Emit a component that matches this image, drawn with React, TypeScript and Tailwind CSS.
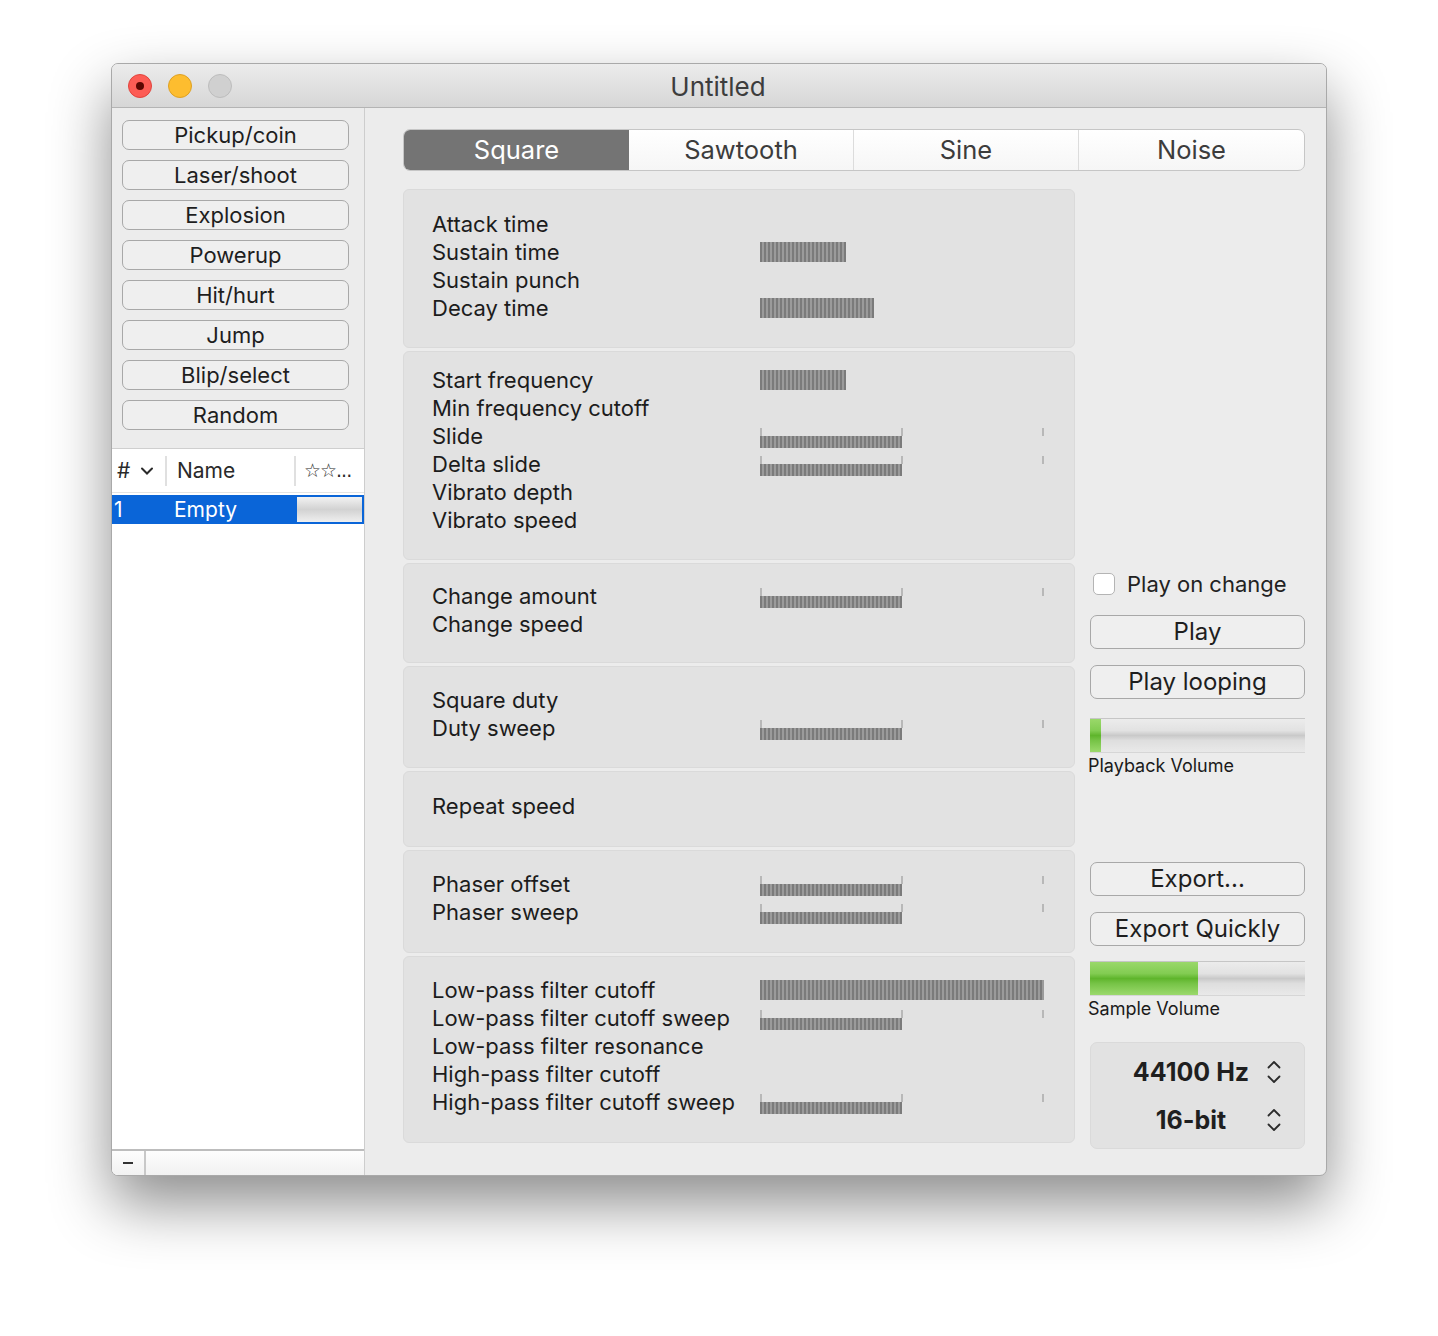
type Row = { label: string; kind: 'none' | 'bar' | 'center'; w?: number };
type Group = { h: number; pt: number; rows: Row[] };

const groups: Group[] = [
  {
    h: 159,
    pt: 20,
    rows: [
      { label: 'Attack time', kind: 'none' },
      { label: 'Sustain time', kind: 'bar', w: 86 },
      { label: 'Sustain punch', kind: 'none' },
      { label: 'Decay time', kind: 'bar', w: 114 },
    ],
  },
  {
    h: 209,
    pt: 14,
    rows: [
      { label: 'Start frequency', kind: 'bar', w: 86 },
      { label: 'Min frequency cutoff', kind: 'none' },
      { label: 'Slide', kind: 'center' },
      { label: 'Delta slide', kind: 'center' },
      { label: 'Vibrato depth', kind: 'none' },
      { label: 'Vibrato speed', kind: 'none' },
    ],
  },
  {
    h: 100,
    pt: 18,
    rows: [
      { label: 'Change amount', kind: 'center' },
      { label: 'Change speed', kind: 'none' },
    ],
  },
  {
    h: 102,
    pt: 19,
    rows: [
      { label: 'Square duty', kind: 'none' },
      { label: 'Duty sweep', kind: 'center' },
    ],
  },
  { h: 76, pt: 20, rows: [{ label: 'Repeat speed', kind: 'none' }] },
  {
    h: 103,
    pt: 19,
    rows: [
      { label: 'Phaser offset', kind: 'center' },
      { label: 'Phaser sweep', kind: 'center' },
    ],
  },
  {
    h: 187,
    pt: 19,
    rows: [
      { label: 'Low-pass filter cutoff', kind: 'bar', w: 284 },
      { label: 'Low-pass filter cutoff sweep', kind: 'center' },
      { label: 'Low-pass filter resonance', kind: 'none' },
      { label: 'High-pass filter cutoff', kind: 'none' },
      { label: 'High-pass filter cutoff sweep', kind: 'center' },
    ],
  },
];

const presets = ['Pickup/coin', 'Laser/shoot', 'Explosion', 'Powerup', 'Hit/hurt', 'Jump', 'Blip/select', 'Random'];

const stripes =
  'bg-[repeating-linear-gradient(90deg,#7b7b7b_0px,#7b7b7b_2px,#9b9b9b_2px,#9b9b9b_4px)]';

function Slider({ row }: { row: Row }) {
  if (row.kind === 'bar') {
    return <div className={`h-[20px] ${stripes}`} style={{ width: row.w }} />;
  }
  if (row.kind === 'center') {
    return (
      <div className="w-[284px] mt-[4px]">
        <div className="flex justify-between h-[8px]">
          <div className="w-[2px] bg-[#b8b8b8]" />
          <div className="w-[2px] bg-[#b8b8b8]" />
          <div className="w-[2px] bg-[#b8b8b8]" />
        </div>
        <div className={`w-[142px] h-[12px] ${stripes}`} />
      </div>
    );
  }
  return null;
}

function MacButton({ children, className = '' }: { children: React.ReactNode; className?: string }) {
  return (
    <div
      className={`flex items-center justify-center rounded-[7px] border-[1.5px] border-[#a8a8a8] bg-[#efefef] text-[#1e1e1e] ${className}`}
    >
      {children}
    </div>
  );
}

function VolumeBar({ pct }: { pct: number }) {
  return (
    <div className="h-[35px] w-full border-t border-[#c6c6c6] border-b border-b-[#d6d6d6] bg-[linear-gradient(180deg,#ececec_0%,#e2e2e2_35%,#c9c9c9_50%,#dedede_65%,#e9e9e9_100%)] flex">
      <div
        className="h-full bg-[linear-gradient(180deg,#9ad86a_0%,#82cc52_35%,#5fb52c_50%,#76c346_65%,#9bd96c_100%)]"
        style={{ width: `${pct}%` }}
      />
    </div>
  );
}

function Stepper() {
  return (
    <svg width="16" height="26" viewBox="0 0 16 26" fill="none" stroke="#2b2b2b" strokeWidth="1.8" strokeLinecap="round" strokeLinejoin="round">
      <path d="M2.5 8.5 L8 3 L13.5 8.5" />
      <path d="M2.5 17.5 L8 23 L13.5 17.5" />
    </svg>
  );
}

export default function App() {
  return (
    <div className="min-h-[1336px] bg-white pt-[63px] pl-[111px] font-['Inter','Noto_Sans',sans-serif] text-[#222]">
      <div className="w-[1216px] h-[1113px] rounded-[7px] bg-[#ececec] overflow-hidden border border-[#a9a9a9] shadow-[0_28px_60px_rgba(0,0,0,0.45)] flex flex-col">
        {/* Title bar */}
        <div className="h-[44px] shrink-0 flex items-center relative bg-[linear-gradient(180deg,#ececec,#d6d6d6)] border-b border-[#b4b4b4]">
          <div className="flex gap-[16px] pl-[16px] items-center">
            <div className="w-[24px] h-[24px] rounded-full bg-[#fd5c55] border border-[#e1443d] flex items-center justify-center">
              <div className="w-[8px] h-[8px] rounded-full bg-[#5c0702]" />
            </div>
            <div className="w-[24px] h-[24px] rounded-full bg-[#fdbd2f] border border-[#dea123]" />
            <div className="w-[24px] h-[24px] rounded-full bg-[#d0d0d0] border border-[#bdbdbd]" />
          </div>
          <div className="flex-1 text-center text-[26px] leading-[30px] mt-[2px] text-[#3d3d3d] pr-[122px]">Untitled</div>
        </div>

        <div className="flex flex-1 min-h-0">
          {/* Left panel */}
          <div className="w-[253px] shrink-0 border-r border-[#cdcdcd] flex flex-col">
            <div className="flex flex-col gap-[10px] pt-[12px] pb-[18px] pl-[10px] pr-[15px]">
              {presets.map((p) => (
                <MacButton key={p} className="h-[30px] text-[22px]">
                  {p}
                </MacButton>
              ))}
            </div>
            <div className="flex-1 bg-white border-t border-[#cfcfcf] flex flex-col">
              <div className="h-[44px] flex items-center text-[21px] text-[#2a2a2a] border-b border-[#e4e4e4]">
                <div className="w-[55px] flex items-center pl-[5px] gap-[10px] border-r-2 border-[#e0e0e0] h-[30px]">
                  <span>#</span>
                  <svg width="14" height="10" viewBox="0 0 14 10" fill="none" stroke="#2a2a2a" strokeWidth="2" strokeLinecap="round">
                    <path d="M2 2.5 L7 7.5 L12 2.5" />
                  </svg>
                </div>
                <div className="w-[129px] pl-[10px] border-r-2 border-[#e0e0e0] h-[30px] flex items-center">Name</div>
                <div className="pl-[8px] text-[19px] tracking-[-1px] font-['DejaVu_Sans',sans-serif]">☆☆...</div>
              </div>
              <div className="h-[29px] mt-[2px] flex items-center bg-[#0a65d8] text-white text-[21px]">
                <div className="w-[62px] pl-[2px]">1</div>
                <div className="w-[123px]">Empty</div>
                <div className="flex-1 h-full py-[2px] pr-[2px]">
                  <div className="h-full bg-[linear-gradient(180deg,#f2f2f2,#d2d2d2_50%,#efefef)]" />
                </div>
              </div>
              <div className="flex-1" />
              <div className="h-[26px] border-t-2 border-[#bdbdbd] flex bg-[linear-gradient(180deg,#fdfdfd,#f1f1f1)]">
                <div className="w-[34px] border-r-2 border-[#c8c8c8] flex items-center justify-center">
                  <div className="w-[10px] h-[2px] bg-[#333]" />
                </div>
              </div>
            </div>
          </div>

          {/* Right panel */}
          <div className="flex-1 pt-[21px] pl-[38px] pr-[21px]">
            <div className="grid grid-cols-4 h-[42px] rounded-[7px] border border-[#c6c6c6] bg-[linear-gradient(180deg,#ffffff,#f6f6f6)] overflow-hidden text-[25.5px] text-[#3c3c3c]">
              <div className="bg-[#747474] text-white flex items-center justify-center">Square</div>
              <div className="flex items-center justify-center border-r border-[#dcdcdc]">Sawtooth</div>
              <div className="flex items-center justify-center border-r border-[#dcdcdc]">Sine</div>
              <div className="flex items-center justify-center">Noise</div>
            </div>

            <div className="flex gap-[15px] mt-[18px]">
              <div className="w-[672px] flex flex-col gap-[3px]">
                {groups.map((g, gi) => (
                  <div
                    key={gi}
                    className="rounded-[6px] bg-[#e2e2e2] border border-[#dadada] pl-[28px]"
                    style={{ height: g.h, paddingTop: g.pt }}
                  >
                    {g.rows.map((r) => (
                      <div key={r.label} className="flex items-center h-[28px]">
                        <div className="w-[328px] text-[22px] text-[#1c1c1c] leading-[28px]">{r.label}</div>
                        <Slider row={r} />
                      </div>
                    ))}
                  </div>
                ))}
              </div>

              <div className="flex-1 flex flex-col">
                <div className="mt-[383px] flex items-center gap-[12px] pl-[3px] h-[24px]">
                  <div className="w-[22px] h-[22px] rounded-[5px] border border-[#b4b4b4] bg-white" />
                  <span className="text-[22px]">Play on change</span>
                </div>
                <MacButton className="h-[34px] mt-[19px] text-[24px]">Play</MacButton>
                <MacButton className="h-[34px] mt-[16px] text-[24px]">Play looping</MacButton>
                <div className="mt-[19px]">
                  <VolumeBar pct={5} />
                </div>
                <div className="text-[18px] text-[#1a1a1a] -ml-[2px] mt-[1px] leading-[24px]">Playback Volume</div>

                <MacButton className="h-[34px] mt-[84px] text-[24px]">Export...</MacButton>
                <MacButton className="h-[34px] mt-[16px] text-[24px]">Export Quickly</MacButton>
                <div className="mt-[15px]">
                  <VolumeBar pct={50} />
                </div>
                <div className="text-[18px] text-[#1a1a1a] -ml-[2px] mt-[1px] leading-[24px]">Sample Volume</div>

                <div className="mt-[21px] h-[107px] rounded-[7px] bg-[#e2e2e2] border border-[#dadada] flex flex-col justify-center gap-[22px]">
                  <div className="flex items-center">
                    <span className="ml-[25px] w-[150px] text-center text-[25px] font-bold leading-[26px] text-[#1f1f1f]">44100 Hz</span>
                    <Stepper />
                  </div>
                  <div className="flex items-center">
                    <span className="ml-[25px] w-[150px] text-center text-[25px] font-bold leading-[26px] text-[#1f1f1f]">16-bit</span>
                    <Stepper />
                  </div>
                </div>
              </div>
            </div>
          </div>
        </div>
      </div>
    </div>
  );
}
